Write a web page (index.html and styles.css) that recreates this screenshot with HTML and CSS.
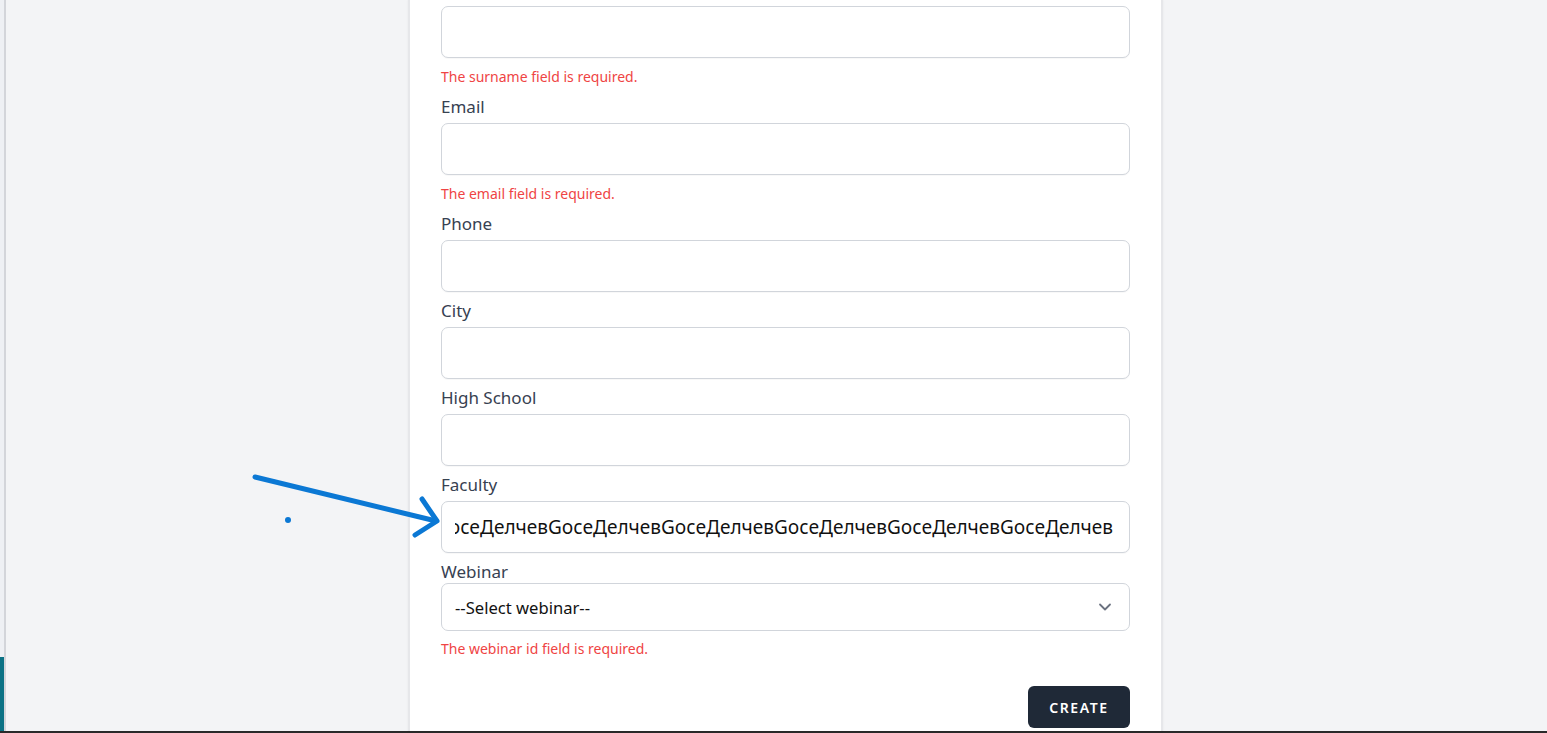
FILE: index.html
```html
<!DOCTYPE html>
<html lang="en">
<head>
<meta charset="utf-8">
<title>Create applicant</title>
<link rel="stylesheet" href="styles.css">
</head>
<body>
<div class="screen">
  <aside class="side">
    <div class="side-top"></div>
    <div class="side-teal"></div>
  </aside>
  <main class="main">
    <form class="card">
      <div class="group first">
        <div class="field"></div>
        <p class="error">The surname field is required.</p>
      </div>
      <div class="group">
        <label class="label">Email</label>
        <div class="field"></div>
        <p class="error">The email field is required.</p>
      </div>
      <div class="group">
        <label class="label">Phone</label>
        <div class="field"></div>
      </div>
      <div class="group">
        <label class="label">City</label>
        <div class="field"></div>
      </div>
      <div class="group">
        <label class="label">High School</label>
        <div class="field"></div>
      </div>
      <div class="group">
        <label class="label">Faculty</label>
        <div class="field filled">
          <div class="scroller"><span class="value">GoceДелчевGoceДелчевGoceДелчевGoceДелчевGoceДелчевGoceДелчевGoceДелчев</span></div>
        </div>
      </div>
      <div class="group select-group">
        <label class="label">Webinar</label>
        <div class="select">
          <span class="select-text">--Select webinar--</span>
          <svg class="chev" width="14" height="10" viewBox="0 0 14 10"><path d="M2 2.5 L7 7.5 L12 2.5" fill="none" stroke="#6b7280" stroke-width="1.8" stroke-linecap="round" stroke-linejoin="round"/></svg>
        </div>
        <p class="error">The webinar id field is required.</p>
      </div>
      <div class="actions">
        <button type="button" class="btn">CREATE</button>
      </div>
    </form>
  </main>
</div>
<div class="taskbar"></div>
<svg class="annot" width="1547" height="733" viewBox="0 0 1547 733">
  <g fill="none" stroke="#0b78d4" stroke-width="5" stroke-linecap="round" stroke-linejoin="round">
    <path d="M255 477 L436 521"/>
    <path d="M422 499 L437 521 L415 535"/>
  </g>
  <circle cx="288" cy="520" r="3" fill="#0b78d4"/>
</svg>
</body>
</html>
```
FILE: styles.css
```css
html, body {
  margin: 0;
  padding: 0;
}
body {
  width: 1547px;
  height: 733px;
  overflow: hidden;
  background: #f3f4f6;
  font-family: "Noto Sans", "Open Sans", sans-serif;
  position: relative;
}
.screen {
  display: flex;
  height: 731px;
}
.side {
  width: 4px;
  border-right: 2px solid #d3d5da;
  display: flex;
  flex-direction: column;
}
.side-top {
  flex: 1;
  background: #eef0f4;
}
.side-teal {
  height: 74px;
  background: #0b7285;
}
.main {
  flex: 1;
  display: flex;
}
.card {
  margin: 0 0 0 402px;
  width: 689px;
  padding: 6px 31px 0;
  background: #fff;
  border-left: 2px solid #e6e7ea;
  border-right: 2px solid #e6e7ea;
  box-shadow: 0 0 2px rgba(0, 0, 0, 0.06);
  display: flex;
  flex-direction: column;
}
.group {
  margin-top: 4px;
  display: flex;
  flex-direction: column;
}
.group.first {
  margin-top: 0;
}
.label {
  font-size: 17px;
  line-height: 27px;
  padding-top: 1px;
  color: #374151;
}
.field {
  margin-top: 3px;
  height: 50px;
  border: 1px solid #d1d5db;
  border-radius: 7px;
  background: #fff;
  box-shadow: 0 1px 1px rgba(0, 0, 0, 0.03);
}
.first .field {
  margin-top: 0;
}
.error {
  margin: 9px 0 1px;
  font-size: 14px;
  line-height: 20px;
  color: #ef4444;
}
.filled {
  display: flex;
  align-items: center;
  padding: 0 16px 0 13px;
}
.scroller {
  flex: 1;
  overflow: hidden;
  display: flex;
  justify-content: flex-end;
}
.value {
  white-space: nowrap;
  font-size: 19px;
  color: #111;
}
.select-group {
  margin-top: 6px;
}
.select-group .label {
  line-height: 23px;
  padding-top: 1px;
}
.select {
  height: 46px;
  border: 1px solid #d1d5db;
  border-radius: 7px;
  display: flex;
  align-items: center;
  justify-content: space-between;
  padding: 0 17px 0 13px;
}
.select-text {
  font-size: 16.6px;
  color: #111;
}
.select-group .error {
  margin-top: 8px;
}
.actions {
  margin-top: 26px;
  display: flex;
  justify-content: flex-end;
}
.btn {
  width: 102px;
  height: 42px;
  border: 0;
  border-radius: 6px;
  background: #1f2937;
  color: #fff;
  font-family: "Noto Sans", sans-serif;
  font-size: 14px;
  font-weight: 600;
  letter-spacing: 1.6px;
}
.taskbar {
  height: 2px;
  background: #2a2a2a;
}
.annot {
  position: absolute;
  left: 0;
  top: 0;
  pointer-events: none;
}
```
